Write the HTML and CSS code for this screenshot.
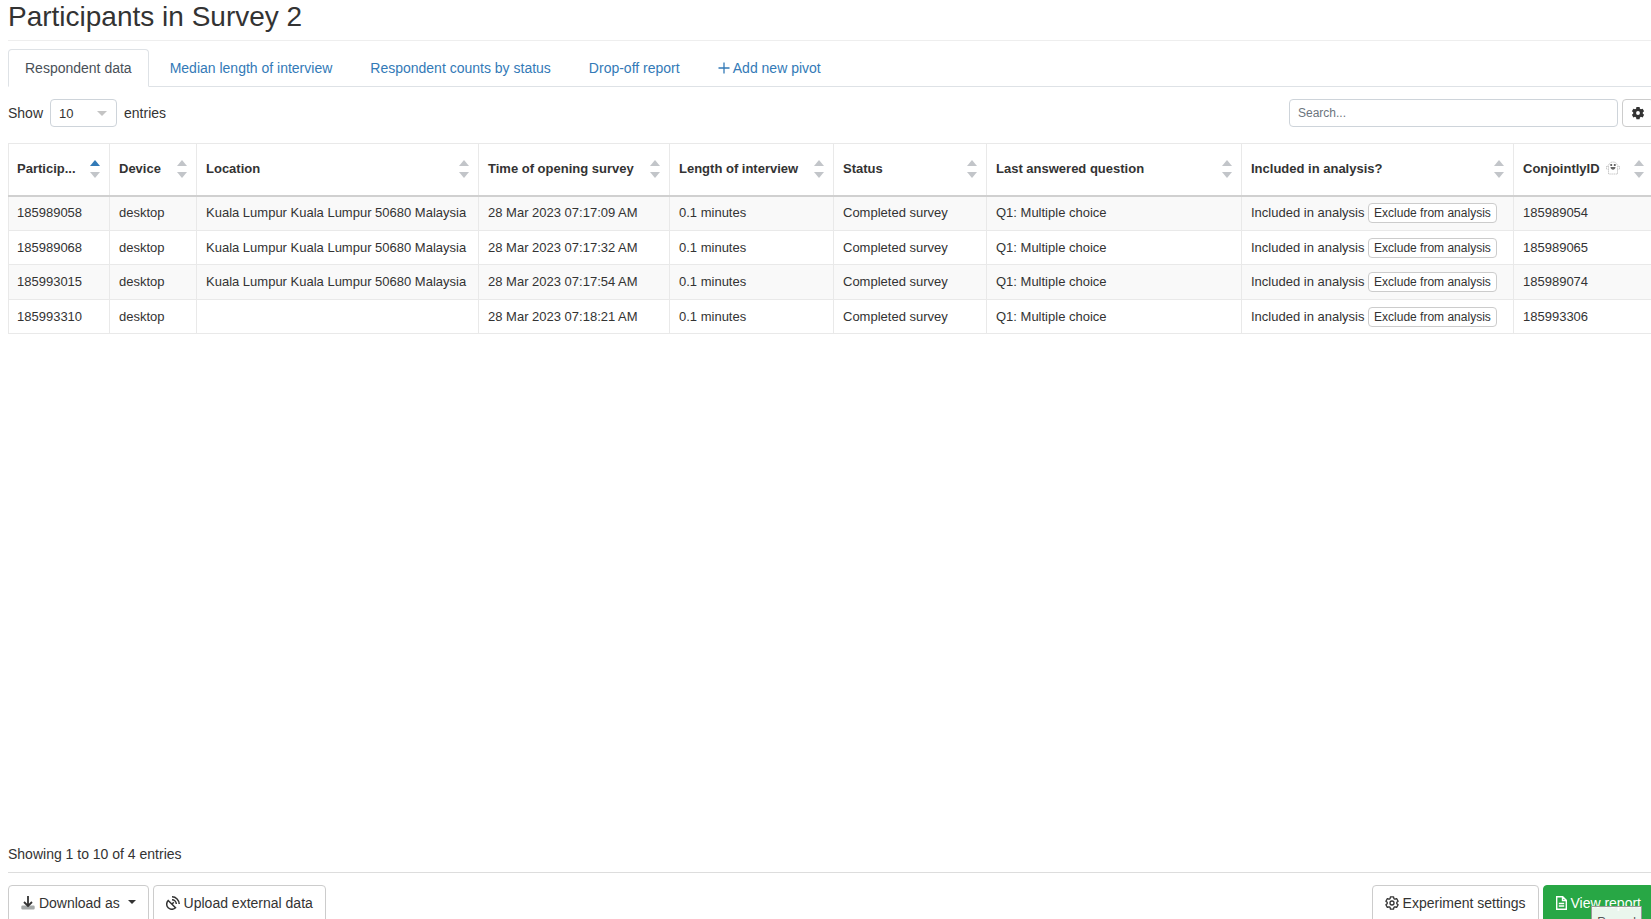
FILE: index.html
```html
<!DOCTYPE html>
<html lang="en">
<head>
    <meta charset="UTF-8">
    <meta name="viewport" content="width=device-width, initial-scale=1.0">
    <title>Participants in Survey 2</title>
    <link rel="stylesheet" href="styles.css">
</head>
<body>
    <div class="page">
        <h1>Participants in Survey 2</h1>

        <nav class="tabs">
            <a href="#respondents" class="tab active">Respondent data</a>
            <a href="#median" class="tab">Median length of interview</a>
            <a href="#counts" class="tab">Respondent counts by status</a>
            <a href="#dropoff" class="tab">Drop-off report</a>
            <a href="#pivot" class="tab">
                <svg class="plus" viewBox="0 0 12 12"><path d="M6 0.5v11M0.5 6h11" fill="none" stroke="currentColor" stroke-width="1.3"/></svg>
                Add new pivot
            </a>
        </nav>

        <div class="toolbar">
            <label for="length">Show</label>
            <select id="length">
                <option>10</option>
                <option>25</option>
                <option>50</option>
            </select>
            <span>entries</span>
            <input type="text" id="search" placeholder="Search..." aria-label="Search">
            <button class="btn btn-gear" aria-label="Table settings">
                <svg class="gear" viewBox="0 0 16 16"><path fill="currentColor" fill-rule="evenodd" d="M6.2 1h3.6l.4 2 1.200.7 1.900-.7 1.700 3-1.500 1.200v1.600L15 10l-1.700 3-1.900-.7-1.200.7-.4 2H6.200l-.4-2-1.200-.7-1.900.7L1 10l1.500-1.200V7.200L1 6l1.700-3 1.900.7L5.800 3zM8 5.800a2.200 2.200 0 1 0 0 4.400 2.200 2.200 0 0 0 0-4.400z"/></svg>
            </button>
        </div>

        <table>
            <colgroup>
                <col class="col-id">
                <col class="col-device">
                <col class="col-location">
                <col class="col-time">
                <col class="col-length">
                <col class="col-status">
                <col class="col-question">
                <col class="col-included">
                <col>
            </colgroup>
            <thead>
                <tr>
                    <th class="sorted"><div class="head"><span>Particip...</span><i class="sort"></i></div></th>
                    <th><div class="head"><span>Device</span><i class="sort"></i></div></th>
                    <th><div class="head"><span>Location</span><i class="sort"></i></div></th>
                    <th><div class="head"><span>Time of opening survey</span><i class="sort"></i></div></th>
                    <th><div class="head"><span>Length of interview</span><i class="sort"></i></div></th>
                    <th><div class="head"><span>Status</span><i class="sort"></i></div></th>
                    <th><div class="head"><span>Last answered question</span><i class="sort"></i></div></th>
                    <th><div class="head"><span>Included in analysis?</span><i class="sort"></i></div></th>
                    <th><div class="head"><span>ConjointlyID
                        <svg class="ghost" viewBox="0 0 14 14"><path d="M2.500 13V5.500C2.500 2.500 4.500 1 7 1s4.500 1.500 4.500 4.500V13zM2.500 5.500.500 5v3l2 .5M11.500 5.500l2-.5v3l-2 .5" fill="none" stroke="#bbb" stroke-width=".8" stroke-dasharray="1.500 .6"/><circle cx="5.200" cy="4" r="1.100" fill="#555"/><circle cx="8.800" cy="4" r="1.100" fill="#555"/><path d="M4.500 6h5C9.500 7.800 8.200 8.800 7 8.800S4.500 7.800 4.500 6z" fill="#666"/></svg></span><i class="sort"></i></div></th>
                </tr>
            </thead>
            <tbody>
                <tr>
                    <td>185989058</td>
                    <td>desktop</td>
                    <td>Kuala Lumpur Kuala Lumpur 50680 Malaysia</td>
                    <td>28 Mar 2023 07:17:09 AM</td>
                    <td>0.1 minutes</td>
                    <td>Completed survey</td>
                    <td>Q1: Multiple choice</td>
                    <td>Included in analysis <button class="btn btn-small">Exclude from analysis</button></td>
                    <td>185989054</td>
                </tr>
                <tr>
                    <td>185989068</td>
                    <td>desktop</td>
                    <td>Kuala Lumpur Kuala Lumpur 50680 Malaysia</td>
                    <td>28 Mar 2023 07:17:32 AM</td>
                    <td>0.1 minutes</td>
                    <td>Completed survey</td>
                    <td>Q1: Multiple choice</td>
                    <td>Included in analysis <button class="btn btn-small">Exclude from analysis</button></td>
                    <td>185989065</td>
                </tr>
                <tr>
                    <td>185993015</td>
                    <td>desktop</td>
                    <td>Kuala Lumpur Kuala Lumpur 50680 Malaysia</td>
                    <td>28 Mar 2023 07:17:54 AM</td>
                    <td>0.1 minutes</td>
                    <td>Completed survey</td>
                    <td>Q1: Multiple choice</td>
                    <td>Included in analysis <button class="btn btn-small">Exclude from analysis</button></td>
                    <td>185989074</td>
                </tr>
                <tr>
                    <td>185993310</td>
                    <td>desktop</td>
                    <td></td>
                    <td>28 Mar 2023 07:18:21 AM</td>
                    <td>0.1 minutes</td>
                    <td>Completed survey</td>
                    <td>Q1: Multiple choice</td>
                    <td>Included in analysis <button class="btn btn-small">Exclude from analysis</button></td>
                    <td>185993306</td>
                </tr>
            </tbody>
        </table>

        <p class="info">Showing 1 to 10 of 4 entries</p>

        <div class="actions">
            <button class="btn">
                <svg class="icon" viewBox="0 0 14 14"><path d="M1.500 9.500h11a1.200 1.200 0 0 1 1.200 1.200v1.600a1.200 1.200 0 0 1-1.200 1.200h-11a1.200 1.200 0 0 1-1.200-1.200v-1.600a1.200 1.200 0 0 1 1.200-1.200z" fill="#a5a9a9"/><path d="M7 0v10M3 6l4 4 4-4" fill="none" stroke="currentColor" stroke-width="1.800"/></svg>
                Download as
                <i class="caret"></i>
            </button>
            <button class="btn">
                <svg class="icon" viewBox="0 0 14 14"><path d="M2.200 4.500a5 5 0 1 0 7.300 7.300zM5.800 8.200l2-2M6 3.700a4.300 4.300 0 0 1 4.300 4.300M6 .8A7.200 7.200 0 0 1 13.200 8" fill="none" stroke="currentColor" stroke-width="1.500"/></svg>
                Upload external data
            </button>
            <button class="btn push">
                <svg class="icon" viewBox="0 0 16 16"><path d="M6.200 1h3.600l.4 2 1.200.7 1.900-.7 1.700 3-1.500 1.200v1.600L15 10l-1.700 3-1.900-.7-1.200.7-.4 2H6.200l-.4-2-1.200-.7-1.900.7L1 10l1.500-1.200V7.200L1 6l1.700-3 1.900.7L5.800 3z" fill="none" stroke="currentColor" stroke-width="1.500" stroke-linejoin="round"/><circle cx="8" cy="8" r="2.300" fill="none" stroke="currentColor" stroke-width="1.500"/></svg>
                Experiment settings
            </button>
            <button class="btn btn-green">
                <svg class="icon icon-file" viewBox="0 0 11 14"><path d="M1.700.7h5l3.600 3.600v9H.7V.7zM6.500.7v3.800h3.800M2.800 7.500h5.400M2.800 10h5.400" fill="none" stroke="currentColor" stroke-width="1.400"/></svg>
                View report
            </button>
            <div class="tooltip">Record</div>
        </div>
    </div>
</body>
</html>
```
FILE: styles.css
```css
* {
    box-sizing: border-box;
}
body {
    margin: 0;
    overflow: hidden;
    font-family: "Liberation Sans", Arial, sans-serif;
    font-size: 14px;
    line-height: 20px;
    color: #333;
    background-color: #fff;
}
/* the page runs a little past the window on the right and at the bottom */
.page {
    display: flex;
    flex-direction: column;
    height: calc(100vh + 4px);
    margin-left: 8px;
    margin-right: -3px;
}
h1 {
    margin: 0 0 8px;
    padding-bottom: 7px;
    font-size: 28px;
    line-height: 33px;
    font-weight: normal;
    border-bottom: 1px solid #eee;
}

/* tabs */
.tabs {
    display: flex;
    gap: 4px;
    border-bottom: 1px solid #dee2e6;
}
.tab {
    padding: 8px 16px;
    margin-bottom: -1px;
    border: 1px solid transparent;
    border-radius: 4px 4px 0 0;
    color: #337ab7;
    text-decoration: none;
}
.tab.active {
    color: #495057;
    background-color: #fff;
    border-color: #dee2e6 #dee2e6 #fff;
}
.plus {
    width: 12px;
    height: 12px;
    vertical-align: -1px;
}

/* toolbar */
.toolbar {
    display: flex;
    align-items: center;
    gap: 7px;
    margin: 12px 0 16px;
}
select {
    width: 67px;
    height: 28px;
    padding: 0 8px;
    font-family: inherit;
    font-size: 13px;
    color: #333;
    border: 1px solid #ced4da;
    border-radius: 4px;
    appearance: none;
    background: #fff url("data:image/svg+xml,%3Csvg xmlns='http://www.w3.org/2000/svg' viewBox='0 0 10 5'%3E%3Cpath d='M0 0h10L5 5z' fill='%23c4c4c4'/%3E%3C/svg%3E") no-repeat right 9px center / 10px 5px;
}
#search {
    width: 329px;
    height: 28px;
    margin-left: auto;
    margin-right: -3px;
    padding: 0 8px;
    font-family: inherit;
    font-size: 12px;
    border: 1px solid #ced4da;
    border-radius: 4px;
}
#search::placeholder {
    color: #6c757d;
}

/* buttons */
.btn {
    padding: 8px 12px;
    font-family: inherit;
    font-size: 14px;
    line-height: 20px;
    color: #333;
    background-color: #fff;
    border: 1px solid #ccc;
    border-radius: 4px;
    white-space: nowrap;
    cursor: pointer;
}
.btn-gear {
    width: 32px;
    height: 28px;
    padding: 0;
}
.btn-small {
    padding: 0 5px;
    font-size: 12px;
    line-height: 18px;
}
.btn-green {
    color: #fff;
    background-color: #28a745;
    border-color: #28a745;
}
.gear {
    width: 14px;
    height: 14px;
    vertical-align: -2px;
}
.icon {
    width: 14px;
    height: 14px;
    vertical-align: -2px;
}
.icon-file {
    width: 11px;
}
.caret {
    display: inline-block;
    margin-left: 4px;
    vertical-align: 4px;
    border: 4px solid transparent;
    border-top-color: #333;
    border-bottom: 0;
}

/* table */
table {
    width: 100%;
    table-layout: fixed;
    border-collapse: collapse;
    font-size: 13px;
}
.col-id { width: 101px; }
.col-device { width: 87px; }
.col-location { width: 282px; }
.col-time { width: 191px; }
.col-length { width: 164px; }
.col-status { width: 153px; }
.col-question { width: 255px; }
.col-included { width: 272px; }
th, td {
    padding: 0 9px;
    text-align: left;
    white-space: nowrap;
    border: 1px solid #e9e9e9;
}
th {
    height: 52px;
    border-bottom: 2px solid #d0d0d0;
}
td {
    height: 34px;
}
tbody tr:nth-child(odd) {
    background-color: #f9f9f9;
}
tbody tr:nth-child(odd) td {
    height: 35px;
}
td:first-child, th:first-child {
    padding-left: 8px;
}
.head {
    display: flex;
    align-items: center;
    justify-content: space-between;
}
.sort {
    flex: none;
    display: flex;
    flex-direction: column;
    gap: 6px;
}
.sort::before, .sort::after {
    content: "";
    border: 5px solid transparent;
}
.sort::before {
    border-top: 0;
    border-bottom: 6px solid #c2c5c9;
}
.sort::after {
    border-bottom: 0;
    border-top: 6px solid #c2c5c9;
}
.sorted .sort::before {
    border-bottom-color: #337ab7;
}
.ghost {
    width: 14px;
    height: 14px;
    margin-left: 3px;
    vertical-align: -2px;
}

/* footer */
.info {
    margin: auto 0 0;
    padding-bottom: 8px;
}
.actions {
    position: relative;
    display: flex;
    gap: 4px;
    padding-top: 12px;
    border-top: 1px solid #ddd;
}
.actions .btn {
    padding-top: 7px;
    padding-bottom: 9px;
}
.push {
    margin-left: auto;
}
.tooltip {
    position: absolute;
    right: 12px;
    top: 33px;
    padding: 7px 5px;
    font-size: 12px;
    line-height: 16px;
    color: #555;
    background-color: rgba(255, 255, 255, 0.9);
    border: 1px solid #999;
}
```
